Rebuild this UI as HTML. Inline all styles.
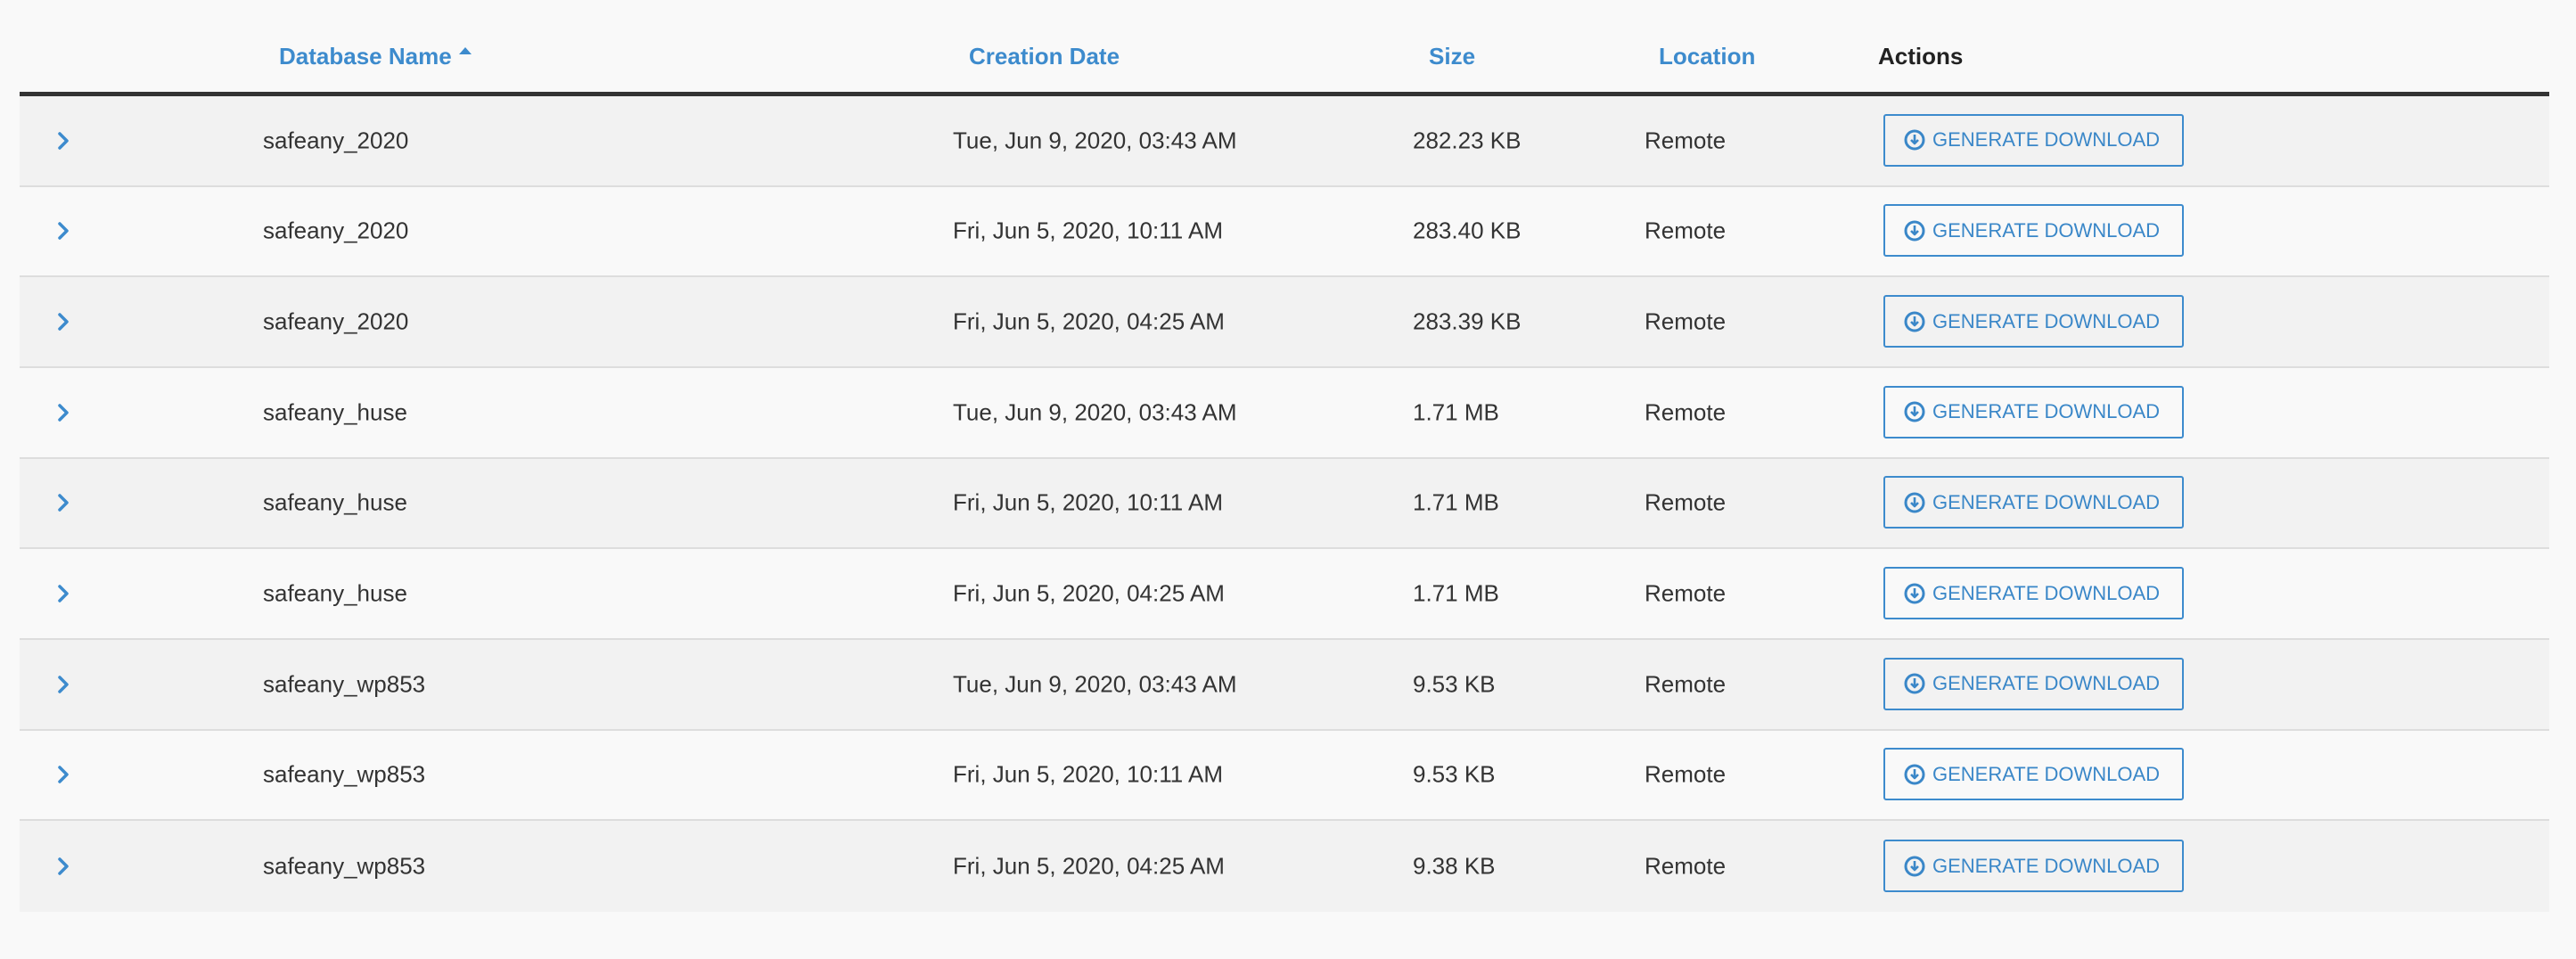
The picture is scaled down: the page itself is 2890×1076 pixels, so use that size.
<!DOCTYPE html>
<html><head><meta charset="utf-8"><style>
*{margin:0;padding:0;box-sizing:border-box}
html,body{width:2890px;height:1076px;background:#f9f9f9;overflow:hidden;font-family:"Liberation Sans",sans-serif;color:#333}
.wrap{position:absolute;left:22px;top:0;width:2838px}
.hdr{position:relative;height:108px;border-bottom:5px solid #333}
.hdr span{position:absolute;top:48px;font-size:26px;font-weight:bold;color:#3d8bcd;white-space:nowrap}
.row{position:relative;height:101.67px;border-bottom:2px solid #ddd;background:#f2f2f2}
.row:nth-child(odd){background:#f9f9f9}
.row:last-child{border-bottom:none}
.row span{position:absolute;top:50%;transform:translateY(-50%);font-size:26px;white-space:nowrap;color:#333}
.chev{position:absolute;left:42px;top:50%;margin-top:-11px}
.btn{position:absolute;left:2091px;top:50%;margin-top:-30px;width:337px;height:59px;border:2px solid #3d8bcd;border-radius:3px;color:#3a87c8;font-size:22px;display:flex;align-items:center;padding-left:21px;white-space:nowrap}
.btn svg{margin-right:8px}
</style></head><body>
<div class="wrap">
<div class="hdr">
<span style="left:291px">Database Name <svg width="16" height="10" viewBox="0 0 16 10" style="vertical-align:10px"><path d="M1 9 L8 1 L15 9 Z" fill="#3d8bcd"/></svg></span>
<span style="left:1065px">Creation Date</span>
<span style="left:1581px">Size</span>
<span style="left:1839px">Location</span>
<span style="left:2085px;color:#222">Actions</span>
</div>
<div id="rows"></div>
</div>
<script>
var d=[["safeany_2020","Tue, Jun 9, 2020, 03:43 AM","282.23 KB"],["safeany_2020","Fri, Jun 5, 2020, 10:11 AM","283.40 KB"],["safeany_2020","Fri, Jun 5, 2020, 04:25 AM","283.39 KB"],["safeany_huse","Tue, Jun 9, 2020, 03:43 AM","1.71 MB"],["safeany_huse","Fri, Jun 5, 2020, 10:11 AM","1.71 MB"],["safeany_huse","Fri, Jun 5, 2020, 04:25 AM","1.71 MB"],["safeany_wp853","Tue, Jun 9, 2020, 03:43 AM","9.53 KB"],["safeany_wp853","Fri, Jun 5, 2020, 10:11 AM","9.53 KB"],["safeany_wp853","Fri, Jun 5, 2020, 04:25 AM","9.38 KB"]];
var h="";
d.forEach(function(r,i){h+='<div class="row" style="background:'+(i%2?'#f9f9f9':'#f2f2f2')+'"><svg class="chev" width="14" height="22" viewBox="0 0 14 22"><path d="M3 3 L11 11 L3 19" fill="none" stroke="#3d8bcd" stroke-width="3.5" stroke-linecap="round" stroke-linejoin="round"/></svg><span style="left:273px">'+r[0]+'</span><span style="left:1047px">'+r[1]+'</span><span style="left:1563px">'+r[2]+'</span><span style="left:1823px">Remote</span><div class="btn"><svg width="24" height="24" viewBox="0 0 24 24"><circle cx="12" cy="12" r="10" fill="none" stroke="#3a87c8" stroke-width="3"/><path d="M12 6 V16 M8 12 L12 16 L16 12" fill="none" stroke="#3a87c8" stroke-width="2.6" stroke-linejoin="round"/></svg>GENERATE DOWNLOAD</div></div>';});
document.getElementById("rows").innerHTML=h;
</script>
</body></html>
